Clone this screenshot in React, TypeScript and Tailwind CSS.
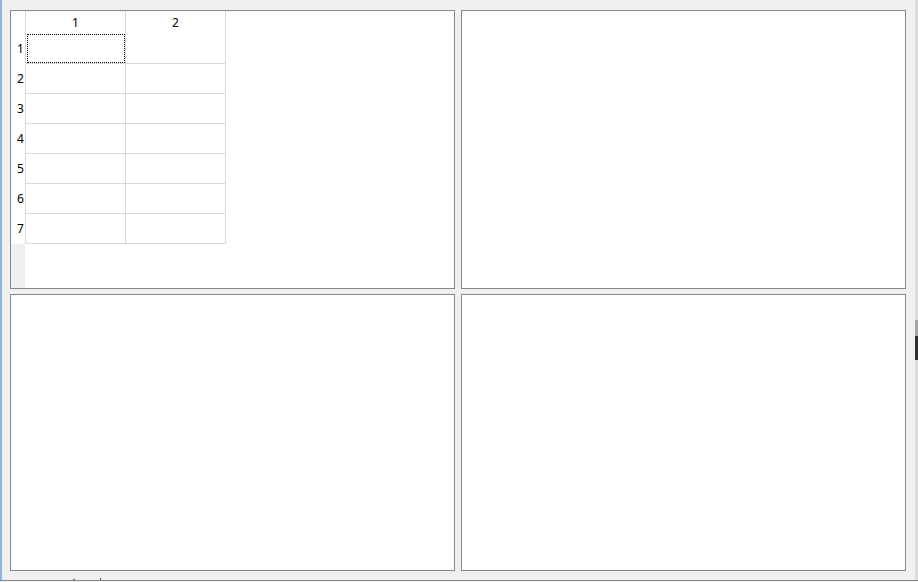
import React from "react";

const rows = [1, 2, 3, 4, 5, 6, 7];

function DataGrid() {
  return (
    <div className="flex h-full w-full bg-white text-[12px] text-black leading-none">
      {/* row header column */}
      <div className="flex w-[14px] flex-col">
        <div className="h-[23px] bg-white" />
        {rows.map((r) => (
          <div key={r} className="flex h-[30px] items-center bg-white pl-[6px]">
            {r}
          </div>
        ))}
        <div className="flex-1 bg-[#f0f0f0]" />
      </div>
      {/* data columns */}
      <div className="flex flex-col">
        <div className="flex h-[23px]">
          <div className="flex w-[100px] items-center justify-center border-l border-[#d8d8d8]">1</div>
          <div className="flex w-[101px] items-center justify-center border-x border-[#d8d8d8]">2</div>
        </div>
        {rows.map((r) => (
          <div key={r} className="flex h-[30px]">
            <div className="relative w-[100px] border-b border-l border-[#d8d8d8]">
              {r === 1 && (
                <div className="absolute left-[1px] top-0 right-0 bottom-0 border border-dotted border-black" />
              )}
            </div>
            <div className="w-[101px] border-x border-b border-[#d8d8d8]" />
          </div>
        ))}
      </div>
    </div>
  );
}

export default function App() {
  return (
    <div
      className="flex h-[582px] w-[918px] flex-col overflow-hidden bg-[#f0f0f0]"
      style={{ fontFamily: '"Noto Sans", "Liberation Sans", sans-serif' }}
    >
      <div className="flex h-[580px]">
        <div className="w-[2px] bg-[#8cb4d8]" />
        <div className="flex flex-1 pl-[8px] pt-[10px]">
          <div className="grid grid-cols-[445px_445px] grid-rows-[279px_277px] gap-x-[6px] gap-y-[5px]">
            <div className="overflow-hidden border border-[#828790] bg-white">
              <DataGrid />
            </div>
            <div className="border border-[#828790] bg-white" />
            <div className="border border-[#828790] bg-white" />
            <div className="border border-[#828790] bg-white" />
          </div>
        </div>
        {/* edge of the neighbouring window's scrollbar */}
        <div className="flex w-[3px] flex-col bg-[#dcdcdc]">
          <div className="h-[320px]" />
          <div className="h-[16px] bg-[#a6a6a6]" />
          <div className="h-[24px] bg-[#333333]" />
          <div className="flex-1" />
        </div>
      </div>
      <div className="relative h-[1px] bg-[#8a8a8a]">
        <div className="absolute left-[73px] top-[-1px] h-[1px] w-[2px] bg-[#555]" />
        <div className="absolute left-[100px] top-[-2px] h-[2px] w-[1px] bg-[#555]" />
      </div>
      <div className="h-[1px]" />
    </div>
  );
}
